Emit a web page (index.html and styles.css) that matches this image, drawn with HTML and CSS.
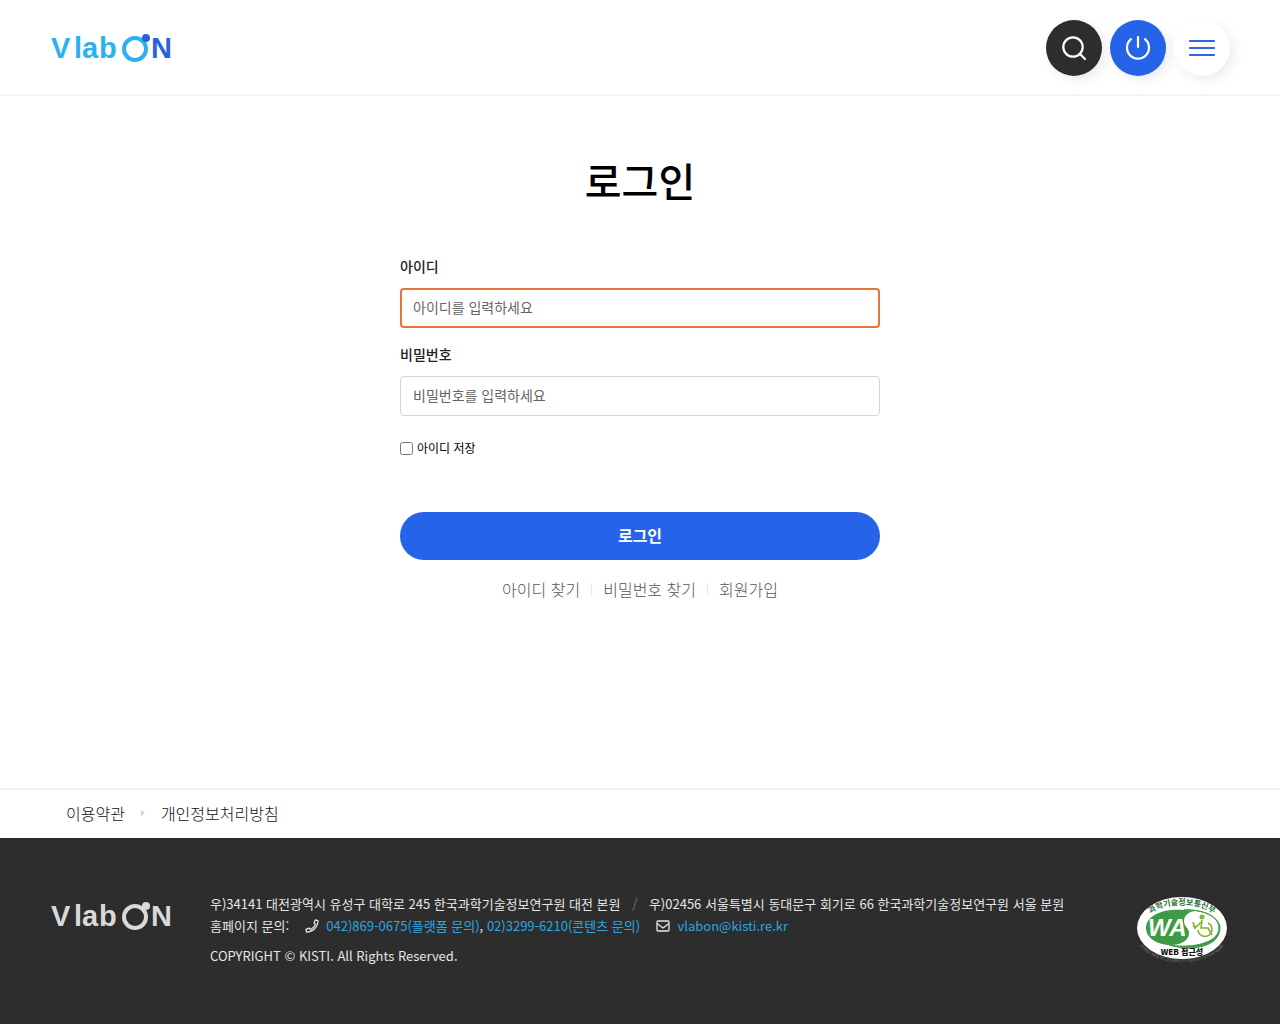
FILE: index.html
```html
<!DOCTYPE html>
<html lang="ko">
<head>
  <meta charset="UTF-8">
  <meta name="viewport" content="width=device-width, initial-scale=1.0">
  <title>로그인 | VlabON</title>
  <link rel="stylesheet" href="styles.css">
</head>
<body>

  <!-- header -->
  <header class="header">
    <a class="logo" href="#" aria-label="VlabON">
      <svg width="120" height="30" viewBox="0 0 120 30">
        <text class="logo-text" x="1 24 32 49" y="25">Vlab</text>
        <circle class="logo-ring" cx="85" cy="16" r="11"/>
        <circle class="logo-dot" cx="96" cy="5" r="4"/>
        <text class="logo-text logo-n" x="101" y="25">N</text>
      </svg>
    </a>
    <div class="header-btns">
      <button type="button" class="round-btn btn-search" aria-label="검색">
        <svg width="28" height="28" viewBox="0 0 28 28">
          <circle cx="13" cy="13" r="9.7"/>
          <path d="M20 20l5 5"/>
        </svg>
      </button>
      <button type="button" class="round-btn btn-power" aria-label="로그인">
        <svg width="28" height="28" viewBox="0 0 28 28">
          <path d="M7 5.2a11 11 0 1 0 14 0M14 3v10"/>
        </svg>
      </button>
      <button type="button" class="round-btn btn-menu" aria-label="전체메뉴">
        <svg width="28" height="28" viewBox="0 0 28 28">
          <path d="M2 7h24M2 14h24M2 21h24"/>
        </svg>
      </button>
    </div>
  </header>

  <!-- login -->
  <main class="main">
    <h1 class="title">로그인</h1>
    <form class="login-form">
      <label class="label" for="userId">아이디</label>
      <input class="input" type="text" id="userId" placeholder="아이디를 입력하세요" autofocus>
      <label class="label" for="userPw">비밀번호</label>
      <input class="input" type="password" id="userPw" placeholder="비밀번호를 입력하세요">
      <div class="save-id">
        <input type="checkbox" id="saveId">
        <label for="saveId">아이디 저장</label>
      </div>
      <button type="submit" class="btn-login">로그인</button>
    </form>
    <ul class="login-links">
      <li><a href="#">아이디 찾기</a></li>
      <li><a href="#">비밀번호 찾기</a></li>
      <li><a href="#">회원가입</a></li>
    </ul>
  </main>

  <!-- footer -->
  <nav class="policy">
    <a href="#">이용약관</a>
    <span class="policy-arrow"></span>
    <a href="#">개인정보처리방침</a>
  </nav>
  <footer class="footer">
    <a class="logo logo-gray" href="#" aria-label="VlabON">
      <svg width="120" height="30" viewBox="0 0 120 30">
        <text class="logo-text" x="1 24 32 49" y="25">Vlab</text>
        <circle class="logo-ring" cx="85" cy="16" r="11"/>
        <circle class="logo-dot" cx="96" cy="5" r="4"/>
        <text class="logo-text logo-n" x="101" y="25">N</text>
      </svg>
    </a>
    <div class="footer-info">
      <p>우)34141 대전광역시 유성구 대학로 245 한국과학기술정보연구원 대전 본원 <span class="slash">/</span> 우)02456 서울특별시 동대문구 회기로 66 한국과학기술정보연구원 서울 분원</p>
      <p>홈페이지 문의:
        <svg class="ico" width="14" height="14" viewBox="0 0 14 14">
          <path d="M10.3 1l2.7.6C13 8 8 13 1.6 13L1 10.3l3-1.3 1.3 1.6C7.8 9.4 9.4 7.8 10.6 5.3L9 4z"/>
        </svg>
        <a href="tel:042-869-0675">042)869-0675(플랫폼 문의)</a>, <a href="tel:02-3299-6210">02)3299-6210(콘텐츠 문의)</a>
        <svg class="ico" width="14" height="14" viewBox="0 0 14 14">
          <rect x="1" y="2" width="12" height="10" rx="1"/>
          <path d="M1 4.5l6 4.5 6-4.5"/>
        </svg>
        <a href="mailto:vlabon@kisti.re.kr">vlabon@kisti.re.kr</a>
      </p>
      <p class="copyright">COPYRIGHT © KISTI. All Rights Reserved.</p>
    </div>
    <a class="wa-mark" href="#" aria-label="웹 접근성 인증마크">
      <svg width="96" height="72" viewBox="0 0 96 72">
        <defs>
          <path id="arcTop" d="M13 24C26 8 70 8 83 24"/>
          <path id="arcBottom" d="M2 46C14 77 82 77 94 46"/>
        </defs>
        <ellipse cx="48" cy="35" rx="45" ry="31" fill="#fff"/>
        <!-- green swirl -->
        <path d="M50 17C28 15 12 23 12 35c0 10 11 17 25 17 12 0 18-6 18-12 0-5-5-6-5-12 0-5 4-9 11-10z" fill="#3d9b46"/>
        <path d="M50 17c20-1 35 7 35 18 0 12-18 19-40 18-5 0-9-1-12-2 12 6 52 8 53-16 0-10-15-19-36-18z" fill="#3d9b46" stroke="#3d9b46"/>
        <g class="wa-person">
          <circle cx="68" cy="24" r="2.5"/>
          <path d="M68 27l-1 8h7l4 7M67 29l-5 5-3-1M59 29l2 7"/>
          <path d="M74 30a7 7 0 1 1-10 7"/>
        </g>
        <text class="wa-text" x="14" y="43">WA</text>
        <text class="wa-top"><textPath href="#arcTop" startOffset="50%">과학기술정보통신부</textPath></text>
        <text class="wa-web" x="48" y="62">WEB 접근성</text>
        <text class="wa-bottom"><textPath href="#arcBottom" startOffset="50%">KOREA WEB ACCESSIBILITY CERTIFICATION MARK</textPath></text>
      </svg>
    </a>
  </footer>

</body>
</html>
```
FILE: styles.css
```css
* {
  box-sizing: border-box;
}

body {
  display: flex;
  flex-direction: column;
  min-height: 100vh;
  margin: 0;
  background: #fff;
  color: #222;
  font-family: "Noto Sans CJK KR", sans-serif;
  font-size: 14px;
  font-weight: 400;
}

h1, p, ul {
  margin: 0;
  padding: 0;
}

a {
  color: inherit;
  text-decoration: none;
}

input, button {
  font-family: inherit;
}

/* header */
.header {
  display: flex;
  justify-content: space-between;
  align-items: center;
  padding: 20px 50px 18px;
  border-bottom: 2px solid #f5f5f5;
}

.logo {
  display: block;
}

.logo svg,
.wa-mark svg {
  display: block;
  overflow: visible;
}

.logo-text {
  fill: #2cb0f0;
  font-family: "Liberation Sans", sans-serif;
  font-size: 29px;
  font-weight: 700;
}

.logo-ring {
  fill: none;
  stroke: #2cb0f0;
  stroke-width: 4;
}

.logo-dot,
.logo-n {
  fill: #2a62dc;
}

.header-btns {
  display: flex;
  gap: 8px;
}

.round-btn {
  display: flex;
  justify-content: center;
  align-items: center;
  width: 56px;
  height: 56px;
  padding: 0;
  border: 0;
  border-radius: 50%;
  box-shadow: 4px 4px 12px rgba(0, 0, 80, 0.08);
  cursor: pointer;
}

.round-btn svg {
  fill: none;
  stroke: #fff;
  stroke-width: 2.2;
  stroke-linecap: round;
}

.btn-search {
  background: #2d2d2d;
}

.btn-power {
  background: #2563e8;
}

.btn-menu {
  background: #fff;
}

.btn-menu svg {
  stroke: #2f66dd;
}

/* login */
.main {
  flex: 1;
  padding: 54px 20px;
}

.title {
  color: #000;
  font-size: 40px;
  font-weight: 500;
  line-height: 60px;
  text-align: center;
}

.login-form {
  display: flex;
  flex-direction: column;
  max-width: 480px;
  margin: 46px auto 0;
}

.label {
  margin-bottom: 12px;
  font-size: 14px;
  font-weight: 500;
  line-height: 20px;
}

.input {
  height: 40px;
  margin-bottom: 16px;
  padding: 0 12px 2px;
  border: 1px solid #d5d5d5;
  border-radius: 4px;
  background: #fff;
  font-size: 14px;
}

.input::placeholder {
  color: #666;
}

.input:focus {
  padding: 0 11px 2px;
  border: 2px solid #e4763a;
  outline: 0;
}

.save-id {
  display: flex;
  align-items: center;
  gap: 4px;
  margin-top: 6px;
  color: #000;
  font-size: 12px;
  line-height: 20px;
}

.save-id input {
  width: 13px;
  height: 13px;
  margin: 0;
}

.btn-login {
  height: 48px;
  margin-top: 54px;
  padding: 0 0 2px;
  border: 0;
  border-radius: 24px;
  background: #2563e8;
  color: #fff;
  font-size: 16px;
  font-weight: 700;
  cursor: pointer;
}

.login-links {
  display: flex;
  justify-content: center;
  margin-top: 17px;
  color: #555;
  font-size: 16px;
  font-weight: 300;
  line-height: 24px;
  list-style: none;
}

.login-links li {
  display: flex;
  align-items: center;
}

.login-links li + li::before {
  content: "";
  width: 1px;
  height: 12px;
  margin: 0 11px;
  background: #e8e8e8;
}

/* footer */
.policy {
  display: flex;
  align-items: center;
  gap: 16px;
  height: 50px;
  padding: 0 66px 2px;
  border-top: 2px solid #f2f2f2;
  color: #111;
  font-size: 16px;
  font-weight: 300;
}

.policy-arrow {
  border: 3px solid transparent;
  border-right: 0;
  border-left: 4px solid #d5d5d5;
}

.footer {
  display: flex;
  align-items: flex-start;
  gap: 40px;
  padding: 55px 50px 57px;
  background: #2d2d2d;
  color: #e5e5e5;
}

.footer .logo {
  margin-top: 8px;
}

.logo-gray .logo-text,
.logo-gray .logo-dot {
  fill: #d9d9d9;
}

.logo-gray .logo-ring {
  stroke: #d9d9d9;
}

.footer-info {
  flex: 1;
  font-size: 13px;
  line-height: 22px;
}

.footer-info a {
  color: #2ca5e0;
}

.slash {
  margin: 0 8px;
  color: #777;
}

.ico {
  margin: 0 4px 0 12px;
  vertical-align: -2px;
  fill: none;
  stroke: #e5e5e5;
  stroke-width: 1.3;
  stroke-linejoin: round;
}

.copyright {
  margin-top: 8px;
}

.wa-text {
  fill: #fff;
  font-family: "Liberation Sans", sans-serif;
  font-size: 24px;
  font-style: italic;
  font-weight: 700;
}

.wa-top {
  fill: #26733a;
  font-size: 8px;
  font-weight: 700;
  text-anchor: middle;
}

.wa-web {
  fill: #111;
  font-size: 8px;
  font-weight: 900;
  text-anchor: middle;
}

.wa-bottom {
  fill: #777;
  font-size: 4px;
  text-anchor: middle;
}

.wa-person {
  fill: none;
  stroke: #7fb52b;
  stroke-width: 1.6;
}

.wa-person circle {
  fill: #7fb52b;
  stroke: none;
}
```
